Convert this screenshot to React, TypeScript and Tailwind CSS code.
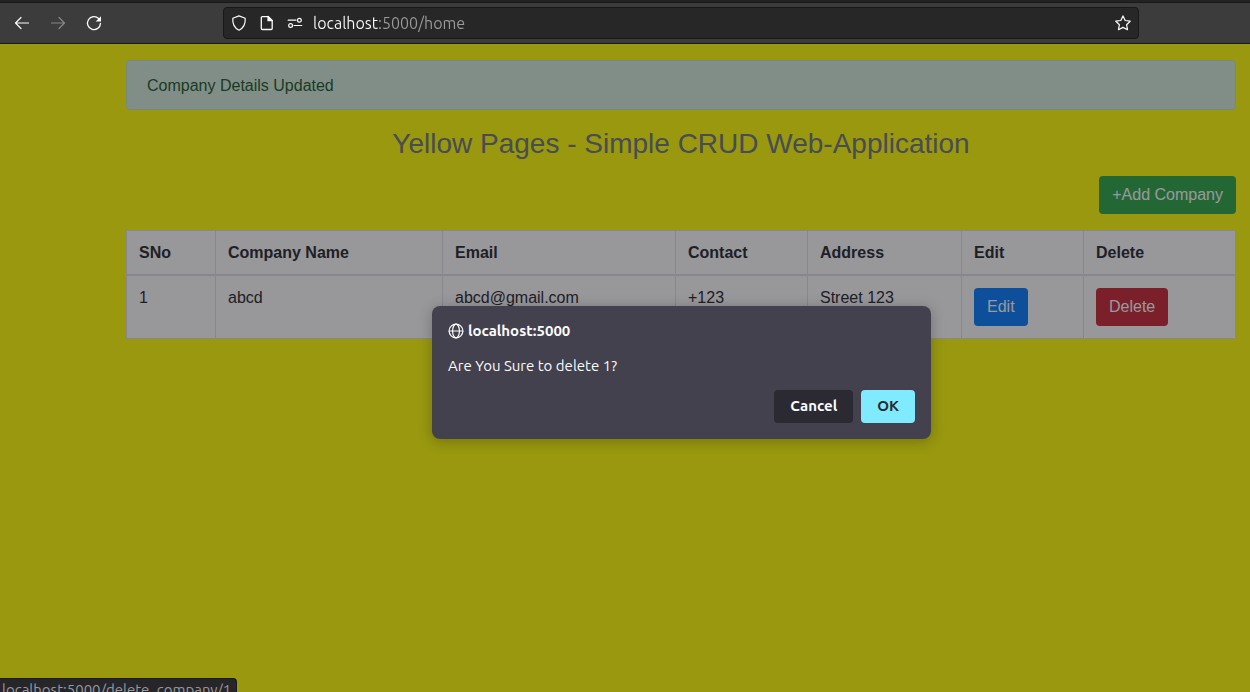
import type { ReactNode } from "react";

type Company = {
  id: number;
  name: string;
  email: string;
  contact: string;
  address: string;
};

const companies: Company[] = [
  { id: 1, name: "abcd", email: "abcd@gmail.com", contact: "+123", address: "Street 123" },
];

const columns = ["SNo", "Company Name", "Email", "Contact", "Address", "Edit", "Delete"];

function Icon({ children, className = "" }: { children: ReactNode; className?: string }) {
  return (
    <svg
      viewBox="0 0 16 16"
      className={`size-4 shrink-0 ${className}`}
      fill="none"
      stroke="currentColor"
      strokeWidth="1.2"
      strokeLinecap="round"
      strokeLinejoin="round"
      aria-hidden="true"
    >
      {children}
    </svg>
  );
}

function Toolbar() {
  return (
    <header className="flex h-11 shrink-0 items-center border-b border-[#1a1a1a] bg-[#3c3c3c] pr-[111px] font-['Ubuntu','Noto_Sans',sans-serif] text-[#fbfbfe] shadow-[inset_0_2px_0_#232323,inset_0_3px_0_#181818]">
      <nav className="flex w-[223px] shrink-0 gap-5 pt-[3px] pl-[14px]" aria-label="Navigation">
        <button type="button" aria-label="Back">
          <Icon>
            <path d="M14.5 8H1.5M7 2.5 1.5 8 7 13.5" />
          </Icon>
        </button>
        <button type="button" aria-label="Forward" className="text-[#868686]">
          <Icon>
            <path d="M1.5 8h13M9 2.5 14.5 8 9 13.5" />
          </Icon>
        </button>
        <button type="button" aria-label="Reload">
          <Icon>
            <path d="M12.600 3.500A6.500 6.500 0 1 0 14.500 8.400" strokeWidth="1.300" />
            <path d="M15 1.200v5.300H9.700z" fill="currentColor" stroke="none" />
          </Icon>
        </button>
      </nav>
      <div className="mt-[3px] flex h-8 min-w-0 flex-1 items-center rounded border border-[#181818] bg-[#272727] px-[7px]">
        <div className="flex gap-3">
          <Icon>
            <path d="M8 .9 14.2 3.3C14.6 8.6 12.7 13 8 15.2 3.300 13 1.400 8.600 1.800 3.300z" />
          </Icon>
          <Icon>
            <path d="M3.300 1.600h6L13.200 5.500v8a1 1 0 0 1-1 1H3.300a1 1 0 0 1-1-1v-10.900a1 1 0 0 1 1-1z" strokeWidth="1.300" />
            <path d="M9 1.500v4.200h4.200z" fill="currentColor" />
          </Icon>
          <Icon>
            <path d="M1.200 5.200H9M7 10.500h7.800" />
            <circle cx="12.400" cy="5.200" r="1.900" />
            <circle cx="3.600" cy="10.500" r="1.900" />
          </Icon>
        </div>
        <input
          type="text"
          aria-label="Address"
          defaultValue="localhost:5000/home"
          className="ml-[10px] min-w-0 flex-1 bg-[linear-gradient(90deg,#fbfbfe_65px,#9a9a9b_65px)] bg-clip-text text-base leading-6 text-transparent outline-none"
        />
        <button type="button" aria-label="Bookmark this page">
          <Icon>
            <path d="m8 .9 2.200 4.600 5 .700-3.600 3.500.900 5L8 12.400 3.500 14.700l.900-5L.800 6.200l5-.700z" />
          </Icon>
        </button>
      </div>
    </header>
  );
}

function CompanyPage() {
  return (
    <main className="pt-4 pr-[14px] pl-[126px] font-['Liberation_Sans',Arial,sans-serif] text-base text-[#212529]">
      <div role="alert" className="rounded border border-[#c3e6cb] bg-[#d4edda] px-5 pt-3 pb-[10px] leading-[26px] text-[#155724]">
        Company Details Updated
      </div>
      <h3 className="mt-4 text-center text-[28px] leading-9 text-[#6c757d]">
        Yellow Pages - Simple CRUD Web-Application
      </h3>
      <div className="mt-[14px] mb-4 flex justify-end">
        <button type="button" className="rounded bg-[#28a745] px-[13px] py-[7px] text-white">
          +Add Company
        </button>
      </div>
      <table className="w-full table-fixed border-collapse border border-[#dee2e6] bg-[#fdfdfe] text-left">
        <colgroup>
          <col className="w-[89px]" />
          <col className="w-[227px]" />
          <col className="w-[233px]" />
          <col className="w-[132px]" />
          <col className="w-[154px]" />
          <col className="w-[122px]" />
          <col />
        </colgroup>
        <thead>
          <tr>
            {columns.map((name) => (
              <th key={name} className="border border-b-2 border-[#dee2e6] px-3 pt-[10px] pb-[9px] font-bold">
                {name}
              </th>
            ))}
          </tr>
        </thead>
        <tbody>
          {companies.map((c) => (
            <tr key={c.id} className="align-top">
              {[c.id, c.name, c.email, c.contact, c.address].map((value, i) => (
                <td key={i} className="border border-[#dee2e6] px-3 py-[10px]">
                  {value}
                </td>
              ))}
              <td className="border border-[#dee2e6] p-3">
                <button type="button" className="rounded bg-[#007bff] px-[13px] py-[7px] text-white">
                  Edit
                </button>
              </td>
              <td className="border border-[#dee2e6] p-3">
                <button type="button" className="rounded bg-[#c82333] px-[13px] py-[7px] text-white">
                  Delete
                </button>
              </td>
            </tr>
          ))}
        </tbody>
      </table>
    </main>
  );
}

function ConfirmDialog() {
  return (
    <div className="absolute inset-0 flex items-start justify-center bg-[#1c1b22]/45 pt-[262px] pr-[13px] pl-[126px]">
      <div
        role="dialog"
        aria-modal="true"
        aria-labelledby="confirm-title"
        className="w-[499px] rounded-lg bg-[#42414d] p-4 font-['Ubuntu','Noto_Sans',sans-serif] text-[15px] text-[#fbfbfe] shadow-[0_2px_14px_rgba(0,0,0,0.25)]"
      >
        <h2 id="confirm-title" className="flex items-center gap-1 leading-[18px] font-bold">
          <Icon>
            <circle cx="8" cy="8" r="6.900" />
            <ellipse cx="8" cy="8" rx="3.400" ry="6.900" />
            <path d="M1.200 8h13.600" />
          </Icon>
          localhost:5000
        </h2>
        <p className="mt-4 leading-5">Are You Sure to delete 1?</p>
        <div className="mt-[14px] flex justify-end gap-2 font-bold">
          <button type="button" className="h-[33px] rounded bg-[#2b2a33] px-4">
            Cancel
          </button>
          <button type="button" className="h-[33px] rounded bg-[#80ebff] px-4 text-[#2b2a33]">
            OK
          </button>
        </div>
      </div>
    </div>
  );
}

export default function App() {
  return (
    <div className="flex h-screen flex-col">
      <Toolbar />
      <div className="relative min-h-0 flex-1 overflow-hidden bg-[#ffff00]">
        <CompanyPage />
        <ConfirmDialog />
        <div className="absolute bottom-0 left-0 h-[14px] overflow-hidden rounded-tr border-t border-r border-[#1a1a1e] bg-[#26262a] pr-[5px] pl-[2px] font-['Ubuntu','Noto_Sans',sans-serif] text-[15px] leading-[22px] text-[#98989b]">
          localhost:5000/delete_company/1
        </div>
      </div>
    </div>
  );
}
